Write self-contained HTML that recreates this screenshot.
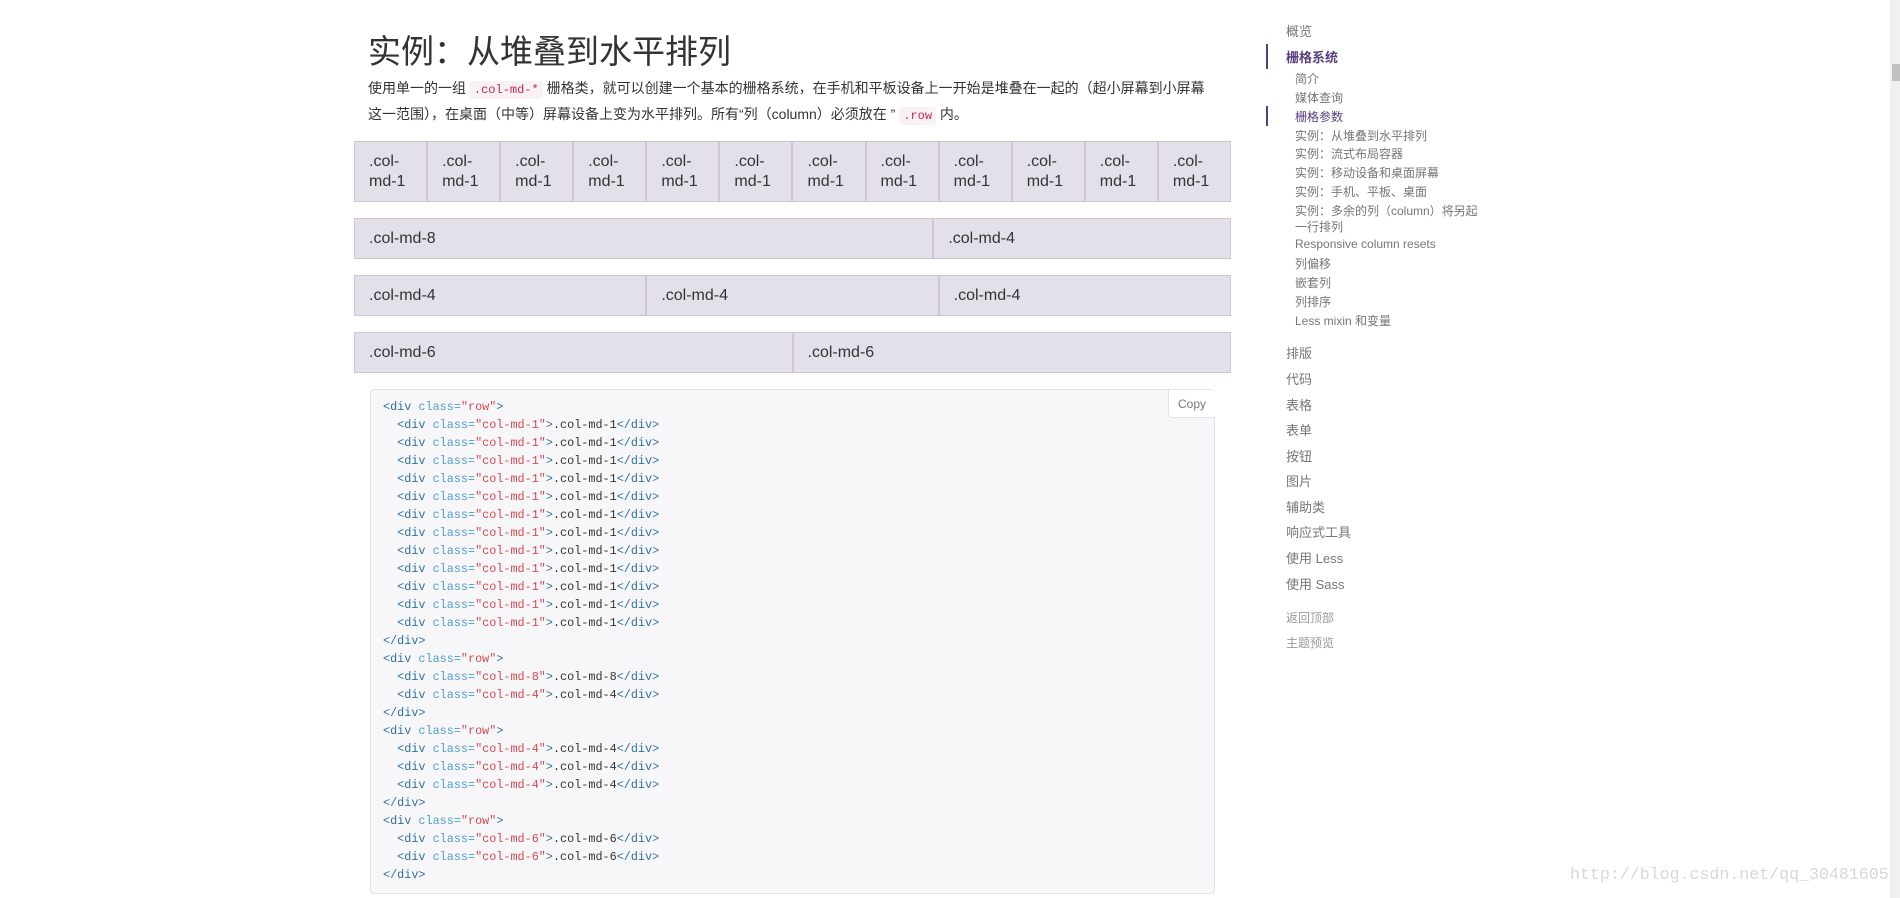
<!DOCTYPE html>
<html><head><meta charset="utf-8">
<style>
*{margin:0;padding:0;box-sizing:border-box}
body{width:1900px;height:898px;overflow:hidden;background:#fff;position:relative;font-family:"Liberation Sans","Noto Sans CJK SC",sans-serif;color:#333}
.a{position:absolute;white-space:nowrap}
h1{position:absolute;left:368px;top:30px;font-size:33px;font-weight:400;color:#333;font-family:"Liberation Sans","Noto Sans CJK SC",sans-serif;line-height:44px}
.p{position:absolute;left:368px;top:76px;width:850px;font-size:14px;line-height:24px;color:#333}
code.c{font-family:"Liberation Mono",monospace;font-size:12px;color:#c7254e;background:#f9f2f4;padding:2px 4px;border-radius:3px}
.row{position:absolute;left:354px;width:877px;display:flex}
.cell{flex:1;background:#e4e0ea;border:1px solid #cdc6d6;font-size:16px;line-height:20px;padding-left:14px;display:flex;align-items:center;color:#333}
.pre{position:absolute;left:370px;top:389px;width:845px;height:505px;background:#f7f7f9;border:1px solid #e1e1e8;border-radius:4px}
.code{position:absolute;left:383px;top:398px;font-family:"Liberation Mono",monospace;font-size:11.8px;line-height:18px;color:#333;white-space:pre}
.t{color:#2f6f9f}.at{color:#4f9fcf}.s{color:#d44950}
.copy{position:absolute;left:1168px;top:390px;width:47px;height:28px;background:#fff;border-left:1px solid #e1e1e8;border-bottom:1px solid #e1e1e8;border-radius:0 4px 0 4px;font-size:12px;color:#777;text-align:center;line-height:28px}
.nav{color:#767676;font-size:13px}
.sub{color:#767676;font-size:12px}
</style></head><body>
<h1>实例：从堆叠到水平排列</h1>
<div class="p">使用单一的一组 <code class="c">.col-md-*</code> 栅格类，就可以创建一个基本的栅格系统，在手机和平板设备上一开始是堆叠在一起的（超小屏幕到小屏幕这一范围），在桌面（中等）屏幕设备上变为水平排列。所有“列（column）必须放在 ” <code class="c">.row</code> 内。</div>

<div class="row" style="top:141px;height:61px">
<div class="cell">.col-<br>md-1</div><div class="cell">.col-<br>md-1</div><div class="cell">.col-<br>md-1</div><div class="cell">.col-<br>md-1</div><div class="cell">.col-<br>md-1</div><div class="cell">.col-<br>md-1</div><div class="cell">.col-<br>md-1</div><div class="cell">.col-<br>md-1</div><div class="cell">.col-<br>md-1</div><div class="cell">.col-<br>md-1</div><div class="cell">.col-<br>md-1</div><div class="cell">.col-<br>md-1</div>
</div>
<div class="row" style="top:218px;height:41px"><div class="cell" style="flex:2">.col-md-8</div><div class="cell">.col-md-4</div></div>
<div class="row" style="top:275px;height:41px"><div class="cell">.col-md-4</div><div class="cell">.col-md-4</div><div class="cell">.col-md-4</div></div>
<div class="row" style="top:332px;height:41px"><div class="cell">.col-md-6</div><div class="cell">.col-md-6</div></div>

<div class="pre"></div>
<div class="copy">Copy</div>
<div class="code"><span class="t">&lt;div</span> <span class="at">class=</span><span class="s">"row"</span><span class="t">&gt;</span>
  <span class="t">&lt;div</span> <span class="at">class=</span><span class="s">"col-md-1"</span><span class="t">&gt;</span>.col-md-1<span class="t">&lt;/div&gt;</span>
  <span class="t">&lt;div</span> <span class="at">class=</span><span class="s">"col-md-1"</span><span class="t">&gt;</span>.col-md-1<span class="t">&lt;/div&gt;</span>
  <span class="t">&lt;div</span> <span class="at">class=</span><span class="s">"col-md-1"</span><span class="t">&gt;</span>.col-md-1<span class="t">&lt;/div&gt;</span>
  <span class="t">&lt;div</span> <span class="at">class=</span><span class="s">"col-md-1"</span><span class="t">&gt;</span>.col-md-1<span class="t">&lt;/div&gt;</span>
  <span class="t">&lt;div</span> <span class="at">class=</span><span class="s">"col-md-1"</span><span class="t">&gt;</span>.col-md-1<span class="t">&lt;/div&gt;</span>
  <span class="t">&lt;div</span> <span class="at">class=</span><span class="s">"col-md-1"</span><span class="t">&gt;</span>.col-md-1<span class="t">&lt;/div&gt;</span>
  <span class="t">&lt;div</span> <span class="at">class=</span><span class="s">"col-md-1"</span><span class="t">&gt;</span>.col-md-1<span class="t">&lt;/div&gt;</span>
  <span class="t">&lt;div</span> <span class="at">class=</span><span class="s">"col-md-1"</span><span class="t">&gt;</span>.col-md-1<span class="t">&lt;/div&gt;</span>
  <span class="t">&lt;div</span> <span class="at">class=</span><span class="s">"col-md-1"</span><span class="t">&gt;</span>.col-md-1<span class="t">&lt;/div&gt;</span>
  <span class="t">&lt;div</span> <span class="at">class=</span><span class="s">"col-md-1"</span><span class="t">&gt;</span>.col-md-1<span class="t">&lt;/div&gt;</span>
  <span class="t">&lt;div</span> <span class="at">class=</span><span class="s">"col-md-1"</span><span class="t">&gt;</span>.col-md-1<span class="t">&lt;/div&gt;</span>
  <span class="t">&lt;div</span> <span class="at">class=</span><span class="s">"col-md-1"</span><span class="t">&gt;</span>.col-md-1<span class="t">&lt;/div&gt;</span>
<span class="t">&lt;/div&gt;</span>
<span class="t">&lt;div</span> <span class="at">class=</span><span class="s">"row"</span><span class="t">&gt;</span>
  <span class="t">&lt;div</span> <span class="at">class=</span><span class="s">"col-md-8"</span><span class="t">&gt;</span>.col-md-8<span class="t">&lt;/div&gt;</span>
  <span class="t">&lt;div</span> <span class="at">class=</span><span class="s">"col-md-4"</span><span class="t">&gt;</span>.col-md-4<span class="t">&lt;/div&gt;</span>
<span class="t">&lt;/div&gt;</span>
<span class="t">&lt;div</span> <span class="at">class=</span><span class="s">"row"</span><span class="t">&gt;</span>
  <span class="t">&lt;div</span> <span class="at">class=</span><span class="s">"col-md-4"</span><span class="t">&gt;</span>.col-md-4<span class="t">&lt;/div&gt;</span>
  <span class="t">&lt;div</span> <span class="at">class=</span><span class="s">"col-md-4"</span><span class="t">&gt;</span>.col-md-4<span class="t">&lt;/div&gt;</span>
  <span class="t">&lt;div</span> <span class="at">class=</span><span class="s">"col-md-4"</span><span class="t">&gt;</span>.col-md-4<span class="t">&lt;/div&gt;</span>
<span class="t">&lt;/div&gt;</span>
<span class="t">&lt;div</span> <span class="at">class=</span><span class="s">"row"</span><span class="t">&gt;</span>
  <span class="t">&lt;div</span> <span class="at">class=</span><span class="s">"col-md-6"</span><span class="t">&gt;</span>.col-md-6<span class="t">&lt;/div&gt;</span>
  <span class="t">&lt;div</span> <span class="at">class=</span><span class="s">"col-md-6"</span><span class="t">&gt;</span>.col-md-6<span class="t">&lt;/div&gt;</span>
<span class="t">&lt;/div&gt;</span></div>

<!-- sidebar -->
<div class="a nav" style="left:1286px;top:21px">概览</div>
<div class="a" style="left:1266px;top:44px;width:2px;height:25px;background:#563d7c"></div>
<div class="a nav" style="left:1286px;top:47px;color:#563d7c;font-weight:bold">栅格系统</div>
<div class="a" style="left:1266px;top:106px;width:2px;height:20px;background:#563d7c"></div>
<div class="a sub" style="left:1295px;top:70px">简介</div>
<div class="a sub" style="left:1295px;top:89px">媒体查询</div>
<div class="a sub" style="left:1295px;top:108px;color:#563d7c">栅格参数</div>
<div class="a sub" style="left:1295px;top:127px">实例：从堆叠到水平排列</div>
<div class="a sub" style="left:1295px;top:145px">实例：流式布局容器</div>
<div class="a sub" style="left:1295px;top:164px">实例：移动设备和桌面屏幕</div>
<div class="a sub" style="left:1295px;top:183px">实例：手机、平板、桌面</div>
<div class="a sub" style="left:1295px;top:202px">实例：多余的列（column）将另起</div>
<div class="a sub" style="left:1295px;top:218px">一行排列</div>
<div class="a sub" style="left:1295px;top:237px">Responsive column resets</div>
<div class="a sub" style="left:1295px;top:255px">列偏移</div>
<div class="a sub" style="left:1295px;top:274px">嵌套列</div>
<div class="a sub" style="left:1295px;top:293px">列排序</div>
<div class="a sub" style="left:1295px;top:312px">Less mixin 和变量</div>
<div class="a nav" style="left:1286px;top:343px">排版</div>
<div class="a nav" style="left:1286px;top:369px">代码</div>
<div class="a nav" style="left:1286px;top:395px">表格</div>
<div class="a nav" style="left:1286px;top:420px">表单</div>
<div class="a nav" style="left:1286px;top:446px">按钮</div>
<div class="a nav" style="left:1286px;top:471px">图片</div>
<div class="a nav" style="left:1286px;top:497px">辅助类</div>
<div class="a nav" style="left:1286px;top:522px">响应式工具</div>
<div class="a nav" style="left:1286px;top:548px">使用 Less</div>
<div class="a nav" style="left:1286px;top:574px">使用 Sass</div>
<div class="a sub" style="left:1286px;top:609px;color:#999">返回顶部</div>
<div class="a sub" style="left:1286px;top:634px;color:#999">主题预览</div>

<div class="a" style="left:1570px;top:865px;font-family:'Liberation Mono',monospace;font-size:16.6px;color:#d8d8d8">http://blog.csdn.net/qq_30481605</div>
<div class="a" style="left:1890px;top:0;width:10px;height:898px;background:#f0f0f0"></div>
<div class="a" style="left:1892px;top:64px;width:8px;height:17px;background:#c1c1c1"></div>
</body></html>
